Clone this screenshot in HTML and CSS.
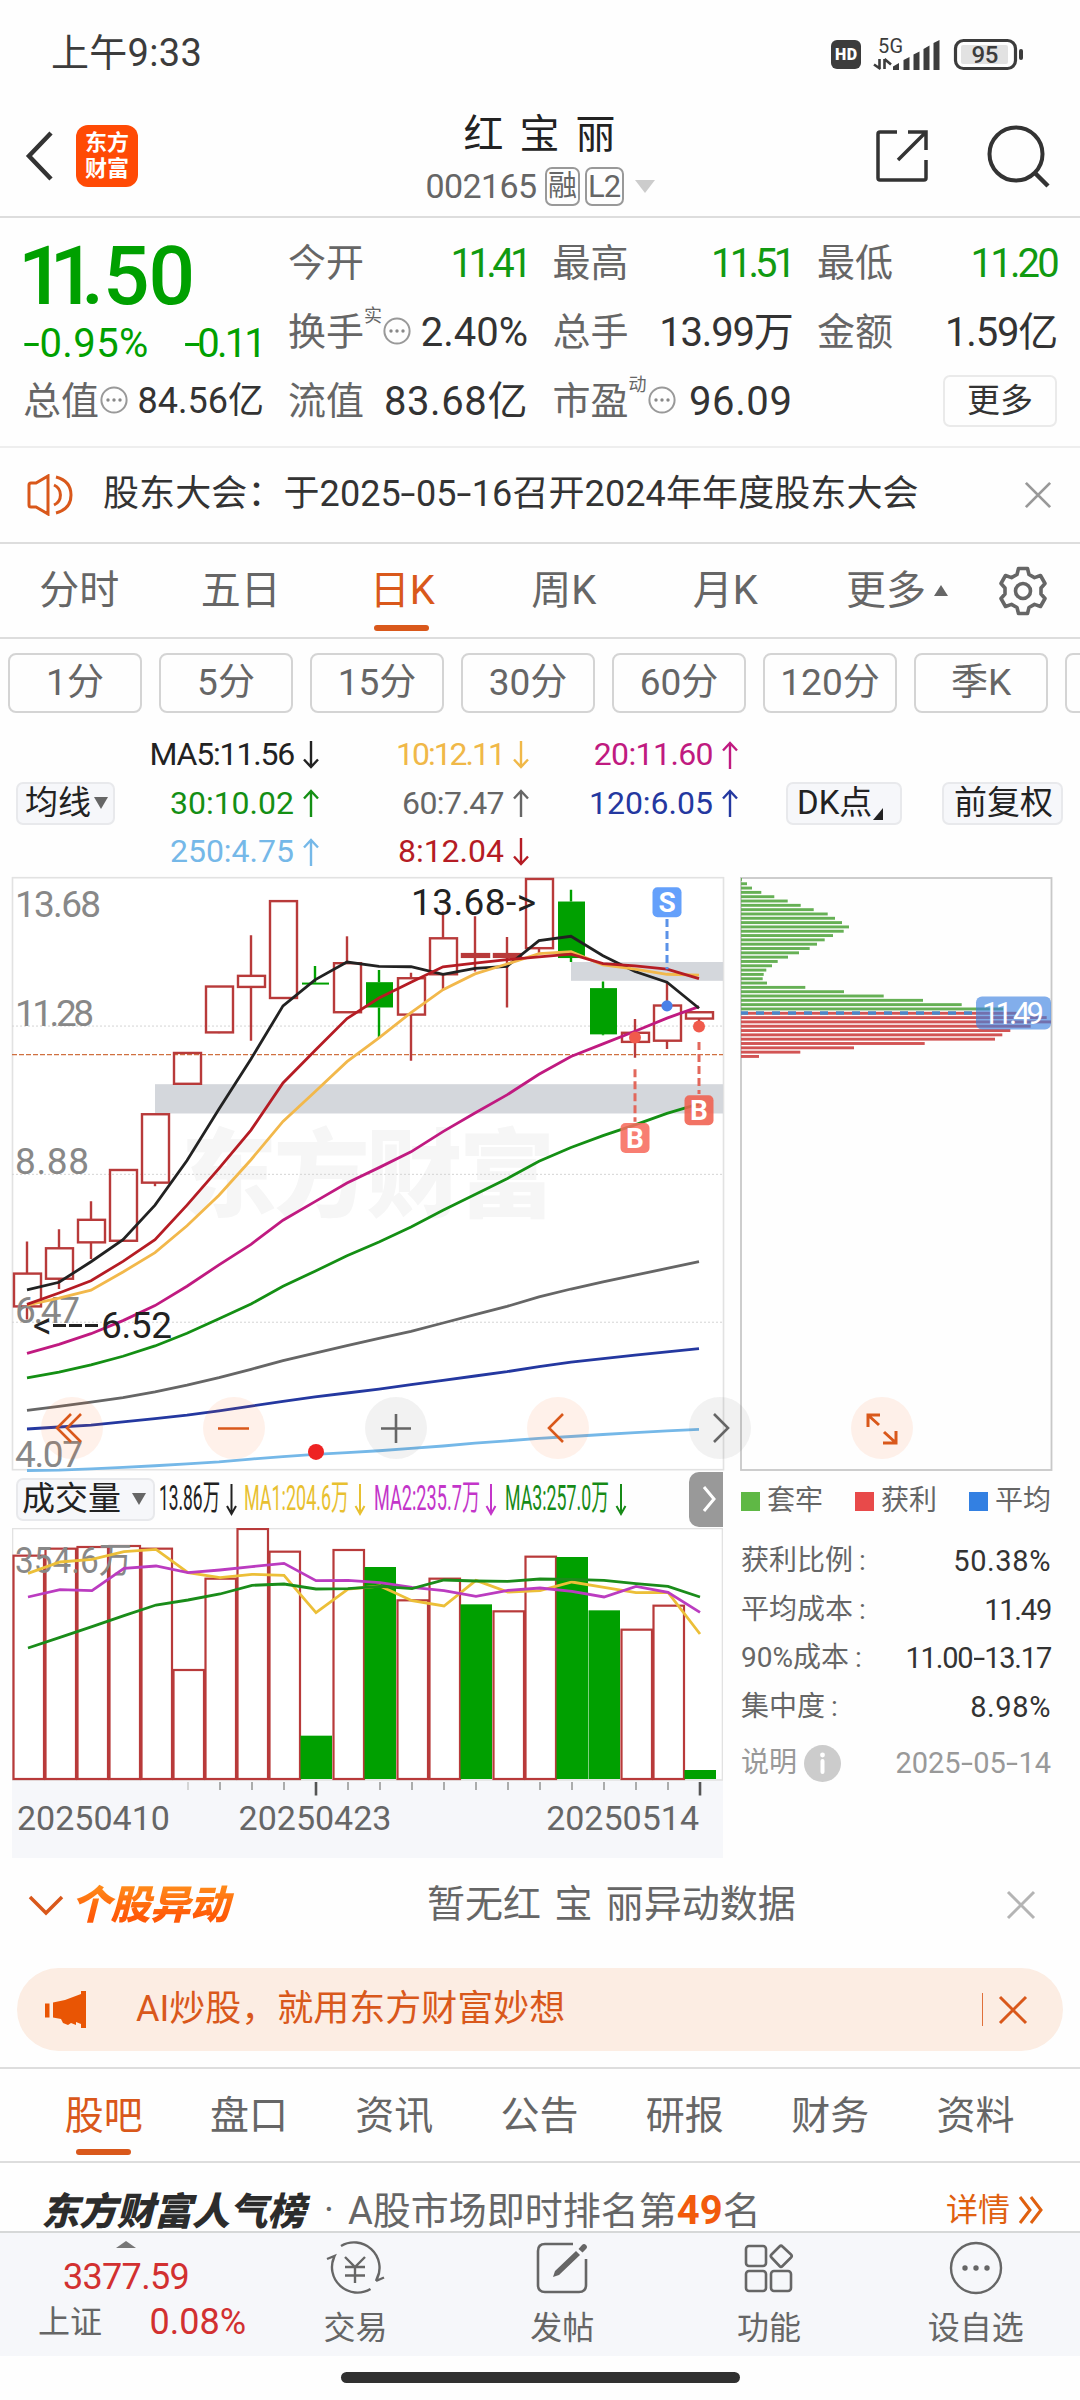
FILE: index.html
```html
<!DOCTYPE html>
<html lang="zh-CN">
<head>
<meta charset="utf-8">
<title>红宝丽 002165</title>
<link rel="stylesheet" href="styles.css">
</head>
<body>
<svg class="defs" width="0" height="0">
  <symbol id="down" viewBox="0 0 16 28"><path d="M8 0V26M1 18.5L8 26L15 18.5" fill="none" stroke="currentColor" stroke-width="2.4"/></symbol>
  <symbol id="up" viewBox="0 0 16 28"><path d="M8 28V2M1 9.5L8 2L15 9.5" fill="none" stroke="currentColor" stroke-width="2.4"/></symbol>
  <symbol id="more" viewBox="0 0 28 28"><circle cx="14" cy="14" r="12.6" fill="none" stroke="#999" stroke-width="2"/><g fill="#888"><circle cx="8" cy="14" r="1.7"/><circle cx="14" cy="14" r="1.7"/><circle cx="20" cy="14" r="1.7"/></g></symbol>
  <symbol id="close" viewBox="0 0 30 30"><path d="M2 2L28 28M28 2L2 28" fill="none" stroke="currentColor" stroke-width="3"/></symbol>
</svg>

<div class="status">
  <span class="clock">上午9:33</span>
  <svg width="200" height="34" viewBox="0 0 200 34">
    <rect x="1" y="3" width="30" height="29" rx="6" fill="#3c3c3c"/>
    <text x="16" y="23" class="hd" textLength="22">HD</text>
    <text x="48" y="16" class="net" textLength="25">5G</text>
    <path d="M49.500 22V32M44 27.500L50.500 32M54.500 32V22M61 27.500L54.500 22" stroke="#3c3c3c" stroke-width="2.600" fill="none"/>
    <path d="M63 33V29.500L69 26V33ZM73.500 33V23L79.500 20V33ZM83.500 33V17.500L89.500 14.500V33ZM93.500 33V12L99.500 8.500V33ZM103.500 33V6L109.500 3V33Z" fill="#3c3c3c"/>
    <rect x="125.500" y="3.500" width="60" height="28" rx="8" fill="none" stroke="#3c3c3c" stroke-width="3.200"/>
    <rect x="131" y="8" width="47" height="19" rx="2" fill="#e2e2e2"/>
    <text x="155" y="26" class="bat" textLength="27">95</text>
    <rect x="189" y="12" width="4" height="11" rx="2" fill="#3c3c3c"/>
  </svg>
</div>

<header class="head">
  <svg class="back" width="30" height="52" viewBox="0 0 30 52"><path d="M27 3L5 26L27 49" fill="none" stroke="#333" stroke-width="4.500"/></svg>
  <div class="logo"><span>东方</span><span>财富</span></div>
  <div class="name">
    <h1>红 宝 丽</h1>
    <div class="code"><span>002165</span><b>融</b><b>L2</b><i></i></div>
  </div>
  <svg class="share" width="54" height="54" viewBox="0 0 54 54"><path d="M22 3H5Q3 3 3 5V49Q3 51 5 51H49Q51 51 51 49V31M33 3H51V21M50 4L23 31" fill="none" stroke="#333" stroke-width="3.500"/></svg>
  <svg width="66" height="66" viewBox="0 0 66 66"><circle cx="30" cy="30" r="26.500" fill="none" stroke="#333" stroke-width="4"/><path d="M49 49L62 62" stroke="#333" stroke-width="4.500"/></svg>
</header>

<section class="quote">
  <div class="price">
    <strong><span>11</span>.50</strong>
    <div class="pct"><span><u>-</u>0.95%</span><span class="chg"><u>-</u>0.11</span></div>
    <div class="cell cap"><label>总值</label><svg class="dots"><use href="#more"/></svg><em class="small">84.56亿</em></div>
  </div>
  <div class="cells">
    <div class="cell"><label>今开</label><em class="down n4">11.41</em></div>
    <div class="cell"><label>最高</label><em class="down n3">11.51</em></div>
    <div class="cell"><label>最低</label><em class="down n2">11.20</em></div>
    <div class="cell"><label>换手</label><sup>实</sup><svg class="dots"><use href="#more"/></svg><em>2.40%</em></div>
    <div class="cell"><label>总手</label><em class="n1">13.99万</em></div>
    <div class="cell"><label>金额</label><em class="n1">1.59亿</em></div>
    <div class="cell"><label>流值</label><em class="p1">83.68亿</em></div>
    <div class="cell"><label>市盈</label><sup>动</sup><svg class="dots"><use href="#more"/></svg><em class="p1">96.09</em></div>
    <div class="cell"><button class="morebtn">更多</button></div>
  </div>
</section>

<section class="notice">
  <svg width="48" height="42" viewBox="0 0 48 42"><path d="M3 11Q3 9 5 9H10L22 2V40L10 33H5Q3 33 3 31Z" fill="none" stroke="#d9581b" stroke-width="3"/><path d="M28 11A11 11 0 0 1 28 31M30 3Q45 7 45 21T30 39" fill="none" stroke="#d9581b" stroke-width="3"/></svg>
  <p>股东大会：于2025<u>-</u>05<u>-</u>16召开2024年年度股东大会</p>
  <svg class="x1"><use href="#close"/></svg>
</section>

<nav class="periods">
  <a>分时</a><a>五日</a><a class="on">日K</a><a>周K</a><a>月K</a>
  <a class="all">更多<i></i></a>
  <svg width="50" height="50" viewBox="0 0 50 50"><path d="M20.500 2.500H29.500L31 8.500L36.500 11.600L42.500 9.500L47 17.500L43 22V28L47 32.500L42.500 40.500L36.500 38.400L31 41.500L29.500 47.500H20.500L19 41.500L13.500 38.400L7.500 40.500L3 32.500L7 28V22L3 17.500L7.500 9.500L13.500 11.600L19 8.500Z" fill="none" stroke="#666" stroke-width="3.600" stroke-linejoin="round"/><circle cx="25" cy="25" r="7.500" fill="none" stroke="#666" stroke-width="3.600"/></svg>
</nav>

<div class="chips"><a>1分</a><a>5分</a><a>15分</a><a>30分</a><a>60分</a><a>120分</a><a>季K</a><a></a></div>

<section class="legend">
  <button class="tag avg">均线<i></i></button>
  <div class="mas">
    <span class="black n1">MA5:11.56<svg><use href="#down"/></svg></span>
    <span class="gold n15">10:12.11<svg><use href="#down"/></svg></span>
    <span class="pink n05">20:11.60<svg><use href="#up"/></svg></span>
    <span class="green">30:10.02<svg><use href="#up"/></svg></span>
    <span class="gray n05">60:7.47<svg><use href="#up"/></svg></span>
    <span class="blue">120:6.05<svg><use href="#up"/></svg></span>
    <span class="sky">250:4.75<svg><use href="#up"/></svg></span>
    <span class="red">8:12.04<svg><use href="#down"/></svg></span>
  </div>
  <button class="tag dk">DK点<i></i></button>
  <button class="tag adj">前复权</button>
</section>

<svg class="chart" id="kline" width="1080" height="600" viewBox="0 0 1080 600"></svg>

<section class="lower">
  <div class="volume">
    <div class="volhead">
      <button class="tag vol">成交量<i></i></button>
      <svg width="480" height="54" viewBox="155 0 480 54">
        <text x="159" y="38" textLength="61" lengthAdjust="spacingAndGlyphs" fill="#222">13.86万</text>
        <text x="244" y="38" textLength="105" lengthAdjust="spacingAndGlyphs" fill="#e8c030">MA1:204.6万</text>
        <text x="374" y="38" textLength="106" lengthAdjust="spacingAndGlyphs" fill="#c335c9">MA2:235.7万</text>
        <text x="505" y="38" textLength="104" lengthAdjust="spacingAndGlyphs" fill="#178a17">MA3:257.0万</text>
        <g fill="none" stroke-width="2"><path d="M231.500 12V42M227 34L231.500 42L236 34" stroke="#222"/><path d="M360 12V42M355.500 34L360 42L364.500 34" stroke="#e8c030"/><path d="M491 12V42M486.500 34L491 42L495.500 34" stroke="#c335c9"/><path d="M621 12V42M616.500 34L621 42L625.500 34" stroke="#178a17"/></g>
      </svg>
      <button class="next"><svg width="16" height="28" viewBox="0 0 16 28"><path d="M3 2L13 14L3 26" fill="none" stroke="#fff" stroke-width="3"/></svg></button>
    </div>
    <svg class="volplot" id="vol" width="711" height="253" viewBox="12 1528 711 253"></svg>
    <div class="axis">
      <svg id="ticks" width="711" height="16" viewBox="12 1780 711 16"></svg>
      <div class="dates"><span>20250410</span><span>20250423</span><span>20250514</span></div>
    </div>
  </div>
  <aside class="cost">
    <div class="keys"><span><i class="kg"></i>套牢</span><span><i class="kr"></i>获利</span><span><i class="kb"></i>平均</span></div>
    <dl>
      <div><dt>获利比例<b>:</b></dt><dd class="p1">50.38%</dd></div>
      <div><dt>平均成本<b>:</b></dt><dd class="n1">11.49</dd></div>
      <div><dt>90%成本<b>:</b></dt><dd class="n1">11.00<u>-</u>13.17</dd></div>
      <div><dt>集中度<b>:</b></dt><dd class="p1">8.98%</dd></div>
    </dl>
    <div class="explain"><span>说明</span><svg width="37" height="37" viewBox="0 0 37 37"><circle cx="18.500" cy="18.500" r="18.500" fill="#ccc"/><path d="M18.500 16V27" fill="none" stroke="#fff" stroke-width="4" stroke-linecap="round"/><circle cx="18.500" cy="10" r="2.400" fill="#fff"/></svg><time>2025<u>-</u>05<u>-</u>14</time></div>
  </aside>
</section>

<section class="moves">
  <svg width="36" height="22" viewBox="0 0 36 22"><path d="M2 3L18 19L34 3" fill="none" stroke="#d9581b" stroke-width="3.500"/></svg>
  <h2>个股异动</h2>
  <p>暂无红 宝 丽异动数据</p>
  <svg class="x2"><use href="#close"/></svg>
</section>

<section class="banner">
  <svg width="44" height="38" viewBox="0 0 44 38"><path d="M0 12.500H4.500V26.500H0ZM8 11.500L20 9L36 3V0H41V37H36V33L31 31V34L26 32L23 34L18 32L16 28L8 26.500Z" fill="#e95504"/></svg>
  <p>AI炒股，就用东方财富妙想</p>
  <i></i>
  <svg class="x3"><use href="#close"/></svg>
</section>

<nav class="tabs"><a class="on">股吧</a><a>盘口</a><a>资讯</a><a>公告</a><a>研报</a><a>财务</a><a>资料</a></nav>

<section class="rank">
  <h3>东方财富人气榜</h3><span class="mid">·</span>
  <p>A股市场即时排名第<b>49</b>名</p>
  <a>详情<svg width="26" height="30" viewBox="0 0 26 30"><path d="M2 2L12 15L2 28M13 2L23 15L13 28" fill="none" stroke="#e0600f" stroke-width="3"/></svg></a>
</section>

<footer class="dock">
  <div class="index"><i></i><b>3377.59</b><p><span>上证</span><em>0.08%</em></p></div>
  <a><svg width="60" height="54" viewBox="0 0 60 54"><g fill="none" stroke="#666" stroke-width="2.400"><path d="M16 5A25.500 25.500 0 0 1 52 38M2 18L9.500 15A25.500 25.500 0 0 0 45.500 48M9.500 15L7 23M51 40L59 36.500M51 40L54 32M20 16L30 26L40 16M20 26H40M20 34.500H40M30 26V42"/></g></svg>交易</a>
  <a><svg width="54" height="54" viewBox="0 0 54 54"><path d="M38 3H10Q3 3 3 10V44Q3 51 10 51H44Q51 51 51 44V18" fill="none" stroke="#666" stroke-width="2.600"/><path d="M41 10L45 14L24 34L18 36L20 30ZM43.500 8L47 4Q49 2 51 4T51 8L47.500 11.500Z" fill="#666"/></svg>发帖</a>
  <a><svg width="54" height="54" viewBox="0 0 54 54"><g fill="none" stroke="#666" stroke-width="2.600"><rect x="4" y="5" width="20" height="20" rx="3"/><rect x="4" y="30" width="20" height="20" rx="3"/><rect x="29" y="30" width="20" height="20" rx="3"/><path d="M37.500 5.500Q39 4 40.500 5.500L49 13.500Q50.500 15 49 16.500L40.500 25Q39 26.500 37.500 25L29.500 16.500Q28 15 29.500 13.500Z"/></g></svg>功能</a>
  <a><svg width="54" height="54" viewBox="0 0 54 54"><circle cx="27" cy="27" r="25" fill="none" stroke="#666" stroke-width="2.400"/><g fill="#666"><circle cx="16" cy="27" r="2.700"/><circle cx="27" cy="27" r="2.700"/><circle cx="38" cy="27" r="2.700"/></g></svg>设自选</a>
</footer>
<div class="home"><i></i></div>
<script src="chart.js"></script>
</body>
</html>
```
FILE: chart.js
```js
// Plot values are stored on a fine vertical scale; K converts them to pixels.
var K = 0.3954, OFF = 16, STEP = 32, X0 = 27;
function y(v) { return +(v * K - OFF).toFixed(2); }
function x(i) { return X0 + i * STEP; }

// [rising, high, bodyTop, bodyBottom, low]
var candles = [
  [1,965,1046,1129,1162],[1,934,982,1059,1085],[1,863,910,967,1009],[1,784,784,963,963],
  [1,643,643,816,825],[1,488,488,566,566],[1,320,320,436,438],[1,190,293,321,457],
  [1,104,104,349,349],[0,268,310,315,315],[1,193,261,385,385],[0,278,309,373,450],
  [1,285,299,391,508],[1,130,198,289,327],[1,142,238,245,282],[1,195,238,245,373],
  [1,48,48,223,235],[0,75,105,248,258],[0,307,324,441,443],[1,402,437,460,500],
  [1,310,368,457,478],[1,385,385,401,435]
];
var lines = {
  '#75b8e8': [1544,1543,1540,1536,1532,1527,1522,1515,1509,1503,1499,1494,1488,1482,1475,1469,1463,1458,1453,1448,1444,1440],
  '#2438a0': [1439,1434,1429,1421,1413,1404,1393,1381,1369,1358,1348,1338,1327,1316,1305,1294,1281,1270,1261,1252,1244,1236],
  '#666666': [1392,1382,1371,1360,1345,1328,1309,1288,1266,1247,1228,1210,1192,1171,1150,1129,1105,1085,1067,1050,1033,1016],
  '#148f14': [1310,1295,1277,1255,1229,1197,1160,1123,1078,1040,1001,966,928,886,846,806,762,727,697,670,641,617],
  '#c01a80': [1248,1225,1198,1165,1127,1078,1024,972,911,864,817,778,738,687,640,594,542,497,465,433,400,371],
  '#222222': [1087,1068,1016,960,873,760,630,503,369,303,258,269,270,289,274,269,204,193,242,282,309,375],
  '#f2b84b': [1126,1108,1088,1042,993,925,848,758,661,586,510,450,386,328,288,263,237,232,265,276,289,291],
  '#b51c24': [1124,1095,1064,1015,960,873,780,683,564,482,401,349,309,270,261,252,245,238,262,268,276,300]
};
function poly(vals, color, fy, x0) {
  return '<polyline fill="none" stroke-width="2.8" stroke="' + color + '" points="' +
    vals.map(function (v, i) { return (x0 + i * STEP) + ',' + fy(v); }).join(' ') + '"/>';
}
var s = '';
s += '<rect x="12.5" y="1.7" width="711" height="592" fill="#fff" stroke="#e2e2e2" stroke-width="1.6"/>';
s += '<text x="368" y="' + y(882) + '" class="mark" text-anchor="middle" textLength="374">东方财富</text>';
[420, 795, 1169].forEach(function (v) { s += '<path d="M12 ' + y(v) + 'H723" stroke="#d4d4d4" stroke-width="1" stroke-dasharray="2 2"/>'; });
s += '<rect x="155" y="' + y(567) + '" width="568" height="29.3" fill="#d4d7dc"/>';
s += '<rect x="571" y="' + y(258) + '" width="152" height="18.8" fill="#d4d7dc"/>';
s += '<path d="M12 ' + y(492) + 'H723" stroke="#d07040" stroke-width="1.2" stroke-dasharray="5 2"/>';
candles.forEach(function (c, i) {
  var cx = x(i), col = c[0] ? '#b83a3a' : '#00a000', t = y(c[2]), b = y(c[3]);
  s += '<path stroke="' + col + '" stroke-width="2.4" d="M' + cx + ' ' + y(c[1]) + 'V' + t + 'M' + cx + ' ' + b + 'V' + y(c[4]) + '"/>';
  if (c[0]) s += '<rect x="' + (cx - 13) + '" y="' + t + '" width="27" height="' + (b - t) + '" fill="' + (b - t < 4 ? col : 'none') + '" stroke="' + col + '" stroke-width="2.4"/>';
  else s += '<rect x="' + (cx - 13) + '" y="' + t + '" width="27" height="' + Math.max(b - t, 2) + '" fill="' + col + '"/>';
});
[['13.68',145,86],['11.28',420,79],['8.88',795,74],['6.47',1170,65],['4.07',1535,68]].forEach(function (a) {
  s += '<text x="15" y="' + y(a[1]) + '" class="lab" textLength="' + a[2] + '">' + a[0] + '</text>';
});
for (var c in lines) s += poly(lines[c], c, y, X0);
s += '<text x="33" y="' + y(1210) + '" class="lab dark">&lt;</text><path d="M53 ' + y(1177) + 'H99" stroke="#222" stroke-width="3" stroke-dasharray="13 3"/>';
s += '<text x="101" y="' + y(1210) + '" class="lab dark" textLength="71">6.52</text>';
s += '<text x="411" y="' + y(138) + '" class="lab dark" textLength="125">13.68-&gt;</text>';
function badge(cx, cy, ch, col) {
  return '<rect x="' + (cx - 14.5) + '" y="' + (y(cy) - 15) + '" width="29" height="30" rx="5" fill="' + col + '" fill-opacity=".88"/><text x="' + cx + '" y="' + (y(cy) + 10) + '" class="badge">' + ch + '</text>';
}
function dash(cx, a, b, col) { return '<path d="M' + cx + ' ' + y(a) + 'V' + y(b) + '" stroke="' + col + '" stroke-width="3" stroke-dasharray="8 4"/>'; }
s += dash(667, 149, 276, '#5b92e8') + dash(635, 529, 662, '#e2685c') + dash(699, 460, 592, '#e2685c');
s += '<circle cx="667" cy="' + y(369) + '" r="5.6" fill="#4a80e8"/><circle cx="635" cy="' + y(449) + '" r="6" fill="#f05a4c"/><circle cx="699" cy="' + y(421) + '" r="6" fill="#f05a4c"/>';
s += badge(667, 107, 'S', '#4f93fa') + badge(635, 703, 'B', '#f76c5e') + badge(699, 633, 'B', '#f0604f');

// Cost distribution
s += '<rect x="741" y="2" width="310.500" height="592" fill="none" stroke="#c8c8c8" stroke-width="1.800"/>';
var dist = [66,81,96,124,163,203,242,281,323,345,366,387,371,339,314,291,269,237,204,173,156,139,131,128,141,256,372,491,609,725,850,890,980,993,932,871,847,825,614,402,241,117];
dist.forEach(function (d, i) {
  s += '<rect x="741" y="' + (y(49 + i * 10.92) - 1.4).toFixed(2) + '" width="' + ((d - 63) / 3).toFixed(1) + '" height="2.9" fill="' + (i < 31 ? '#66b055' : '#d25454') + '"/>';
});
s += '<path d="M741 ' + y(387) + 'H976" stroke="#4a86c8" stroke-width="3.4" stroke-dasharray="8 8" stroke-dashoffset="1"/>';
s += '<rect x="976" y="' + y(345) + '" width="75" height="33" rx="6" fill="#3c80e0" fill-opacity=".64"/><text x="982" y="' + (y(415)) + '" class="avgp" textLength="62">11.49</text>';

// Floating controls
[[72,1],[234,1],[396,0],[558,1],[720,0],[882,1]].forEach(function (p) {
  s += '<circle cx="' + p[0] + '" cy="552" r="31" fill="' + (p[1] ? '#fa6414' : '#555') + '" fill-opacity="' + (p[1] ? .09 : .08) + '"/>';
});
s += '<g fill="none" stroke-width="2.600"><path stroke="#d9581b" d="M71 538L57 552L71 566M81 538L67 552L81 566M218 552.500H249M563 538L549 552L563 566"/><path stroke="#666" d="M396 538V567M381 552.500H411M714 538L728 552L714 566"/></g>';
s += '<path d="M868 551V539H880M868.500 539.500L879 549M896 555V567H883M895.500 566.500L884 556" stroke="#d9581b" stroke-width="3" fill="none"/>';
s += '<circle cx="316" cy="' + y(1497) + '" r="8" fill="#ee2222"/>';
document.getElementById('kline').innerHTML = s;

// Volume
function vy(v) { return +(1460 + v / 3).toFixed(2); }
var greens = {9:1, 11:1, 14:1, 17:1, 18:1, 21:1};
var vols = [287,266,261,258,266,630,356,207,275,827,270,321,421,356,433,454,290,291,451,509,437,930];
var v = '<rect x="12.500" y="1528.500" width="710" height="251.500" fill="#fff" stroke="#e2e2e2" stroke-width="1.600"/>';
vols.forEach(function (d, i) {
  var l = 12.5 + i * 32, g = greens[i];
  v += '<rect x="' + (g ? l : l + 1) + '" y="' + vy(d) + '" width="' + (g ? 31.5 : 30.5) + '" height="' + (1779 - vy(d)) + '" fill="' + (g ? '#00a000' : '#fff') + '" stroke="' + (g ? 'none' : '#b83a3a') + '" stroke-width="2.2"/>';
});
v += '<text x="15" y="' + vy(340) + '" class="vlab" textLength="117" lengthAdjust="spacingAndGlyphs">354.6万</text>';
v += poly([340,306,298,275,268,338,353,343,346,458,387,378,422,438,361,396,392,366,382,398,397,522], '#ecbf38', vy, 28);
v += poly([411,389,392,325,318,338,330,320,310,362,361,368,382,392,409,391,384,394,411,379,397,457], '#bb3cc0', vy, 28);
v += poly([564,532,500,467,435,420,402,376,372,387,386,379,386,360,363,364,357,358,361,371,379,411], '#1a8c1a', vy, 28);
document.getElementById('vol').innerHTML = v;
var t = '';
for (var i = 5; i < 22; i++) {
  var big = i === 9 || i === 21;
  t += '<path d="M' + (28 + i * 32) + ' 1781V' + (big ? 1794.5 : 1789) + '" stroke="' + (big ? '#555' : i === 5 ? '#ccc' : '#999') + '" stroke-width="' + (big ? 2.6 : 1.6) + '"/>';
}
document.getElementById('ticks').innerHTML = t;
```
FILE: styles.css
```css
* { box-sizing: border-box; margin: 0; padding: 0; }
body { width: 1080px; height: 2400px; overflow: hidden; background: #fefefe; color: #333; font-family: Roboto, "Noto Sans CJK SC", sans-serif; font-weight: 400; line-height: 1.2; }
em, i { font-style: normal; }
i { display: block; }
u { display: inline-block; text-decoration: none; transform: scaleX(1.5); margin: 0 2.500px; }
button { font: inherit; color: inherit; background: none; border: 0; }
svg { display: block; flex: none; }
text { font-family: Roboto, "Noto Sans CJK SC", sans-serif; }
.defs { position: absolute; }
.n05 { letter-spacing: -.6px; }
.n1 { letter-spacing: -1.2px; }
.n15 { letter-spacing: -2px; }
.n2 { letter-spacing: -2.8px; }
.n3 { letter-spacing: -3.8px; }
.n4 { letter-spacing: -4.6px; }
.p1 { letter-spacing: .6px; }

.status { height: 108px; display: flex; align-items: center; justify-content: space-between; padding: 0 50px 0 51px; }
.clock { font-size: 38px; color: #3c3c3c; letter-spacing: .3px; }
.hd { font-size: 16px; font-weight: 900; fill: #fff; text-anchor: middle; }
.net { font-size: 20px; fill: #3c3c3c; }
.bat { font-size: 24px; fill: #3c3c3c; text-anchor: middle; font-weight: 500; }

.head { height: 110px; display: flex; align-items: center; border-bottom: 2px solid #ddd; padding: 0 28px 12px 24px; }
.back { margin-right: 22px; }
.logo { width: 62px; height: 62px; border-radius: 12px; background: #ff4a05; color: #fff; font-size: 22px; font-weight: 700; line-height: 26px; padding-top: 5px; text-align: center; }
.logo span { display: block; }
.name { flex: 1; padding-left: 66px; text-align: center; margin-top: 8px; }
.name h1 { font-size: 40px; line-height: 52px; font-weight: 400; color: #222; word-spacing: 6px; }
.code { display: flex; justify-content: center; align-items: center; height: 50px; color: #666; font-size: 34px; letter-spacing: -.6px; padding-left: 1px; }
.code span { margin-right: 8px; }
.code b { font-weight: 400; font-size: 29px; line-height: 35px; border: 2px solid #999; border-radius: 7px; width: 35px; height: 39px; margin-right: 5px; letter-spacing: -1px; }
.code b + b { width: 39px; font-size: 31px; }
.code i { border: 10px solid transparent; border-top: 13px solid #ccc; border-bottom: 0; margin-left: 6px; }
.share { margin-right: 57px; }
.head svg:last-child { margin-top: 1px; }

.quote { height: 230px; display: flex; padding-left: 23px; border-bottom: 2px solid #eee; }
.price { width: 241px; color: #00a000; }
.price strong { display: block; font-size: 82px; font-weight: 500; letter-spacing: -1px; line-height: 90px; margin: 13px 0 0 -5px; }
.price strong span { letter-spacing: -15px; }
.pct { display: flex; justify-content: space-between; font-size: 40px; line-height: 46px; letter-spacing: .4px; }
.chg { letter-spacing: -2.800px; }
.cells { display: grid; grid-template-columns: repeat(3, 240px); grid-auto-rows: 69px; column-gap: 24.500px; padding: 11px 0 0 24px; }
.cell { display: flex; align-items: center; height: 69px; color: #333; font-size: 40px; }
.cell label { font-size: 38px; color: #666; }
.cell em { margin-left: auto; white-space: nowrap; }
.cell em.down { color: #119a11; }
.cell em.small { font-size: 36px; }
.cap { height: 69px; }
sup { width: 18px; font-size: 18px; line-height: 18px; align-self: flex-start; margin-top: 9px; color: #666; }
.dots { width: 28px; height: 28px; margin-top: -4px; margin-left: 1px; }
.morebtn { width: 114px; height: 52px; margin-left: auto; border: 2px solid #eaeaea; border-radius: 7px; font-size: 33px; line-height: 46px; margin-top: -2px; }

.notice { height: 96px; display: flex; align-items: center; padding: 0 28px 0 26px; border-bottom: 2px solid #ddd; }
.notice p { font-size: 36px; flex: 1; margin-left: 29px; letter-spacing: .1px; white-space: nowrap; }
.x1 { width: 28px; height: 28px; color: #999; }

.periods { height: 95px; display: flex; align-items: center; border-bottom: 2px solid #ddd; color: #666; font-size: 40px; }
.periods a { width: 161.500px; height: 93px; line-height: 94px; text-align: center; position: relative; left: -1.500px; }
.on { color: #d9581b; }
.on::after { content: ""; position: absolute; left: 50%; bottom: 6px; width: 55px; height: 6px; margin-left: -28px; border-radius: 3px; background: #d9581b; }
.periods .all { width: 190px; display: flex; align-items: center; padding-left: 40px; }
.periods .all i { border: 7px solid transparent; border-bottom: 11px solid #666; border-top: 0; margin-left: 8px; }

.chips { display: flex; gap: 17px; padding: 14px 0 0 8px; height: 91px; overflow: hidden; }
.chips a { flex: none; width: 134px; height: 60px; border: 2px solid #d4d4d4; border-radius: 8px; line-height: 55px; text-align: center; font-size: 37px; color: #666; }

.legend { height: 146px; display: flex; align-items: center; padding: 0 0 0 16px; }
.tag { display: flex; align-items: center; height: 43px; background: #f6f7fa; border: 2px solid #e8e9ec; border-radius: 7px; color: #222; font-size: 33px; line-height: 38px; white-space: nowrap; }
.avg { width: 99px; padding-left: 7px; }
.avg i, .vol i { border: 7px solid transparent; border-top: 12px solid #666; border-bottom: 0; margin-left: 3px; }
.mas { display: grid; grid-template-columns: 204px 210px 209px; grid-auto-rows: 48.500px; width: 623px; font-size: 32px; margin-right: 48px; }
.mas span { display: flex; align-items: center; justify-content: flex-end; }
.mas svg { width: 16px; height: 28px; margin-left: 9px; }
.black { color: #222; } .gold { color: #f0b848; } .pink { color: #c01a80; } .green { color: #148f14; }
.gray { color: #666; } .blue { color: #2438a0; } .sky { color: #75b8e8; } .red { color: #b51c24; }
.dk { width: 116px; padding-left: 9px; }
.dk i { border-left: 10px solid transparent; border-bottom: 12px solid #222; align-self: flex-end; margin: 0 0 3px 1px; }
.adj { width: 121px; margin-left: 40px; padding-left: 10px; }

.chart { margin-bottom: -6px; }
.mark { font-size: 96px; font-weight: 900; fill: #f6f6f6; }
.lab { font-size: 37px; fill: #888; }
.dark { fill: #222; }
.badge { font-size: 28px; font-weight: 700; fill: #fff; text-anchor: middle; }
.avgp { font-size: 31px; fill: #fff; }

.lower { display: flex; height: 388px; }
.volume { width: 723px; padding-left: 12px; }
.volhead { display: flex; align-items: center; height: 58px; }
.volhead text { font-size: 35px; }
.vol { width: 139px; margin-left: 4px; padding-left: 4px; }
.vol i { margin-left: auto; margin-right: 7px; }
.next { margin-left: auto; width: 34px; height: 55px; background: #999; border-radius: 10px 0 0 10px; padding-left: 12px; flex: none; }
.vlab { font-size: 36px; fill: #888; }
.axis { height: 77px; background: #f6f7fa; }
.dates { display: flex; justify-content: space-between; font-size: 34px; line-height: 40px; color: #666; padding: 1px 24px 0 5px; }
.dates span:nth-child(2) { margin-left: -86px; }
.cost { flex: 1; padding: 12px 29px 0 18px; font-size: 28px; color: #666; }
.keys { display: flex; justify-content: space-between; line-height: 38px; margin-bottom: 18px; }
.keys span { display: flex; align-items: center; }
.keys i { width: 19px; height: 19px; margin-right: 7px; }
.kg { background: #5fb845; } .kr { background: #e84a4a; } .kb { background: #3380e2; }
dl div { display: flex; justify-content: space-between; height: 48.500px; line-height: 46px; }
dt b { font-weight: 400; margin-left: 6px; }
dd { color: #333; font-size: 29px; }
.explain { display: flex; align-items: center; color: #999; height: 38px; margin-top: 12px; }
.explain svg { margin-left: 7px; }
.explain time { margin-left: auto; font-size: 29px; letter-spacing: -.1px; }

.moves { height: 94px; display: flex; align-items: center; padding: 0 44px 0 28px; }
.moves h2 { width: 176px; margin-left: 7px; font-size: 40px; font-weight: 900; font-style: italic; letter-spacing: -.5px; line-height: 52px; padding-top: 2px; color: transparent; background: linear-gradient(#ff8a1a 15%, #ff5a08 70%); -webkit-background-clip: text; background-clip: text; white-space: nowrap; }
.moves p { flex: 1; font-size: 38px; color: #666; margin-left: 180px; word-spacing: 4px; white-space: nowrap; }
.x2 { width: 30px; height: 30px; color: #b4b4b4; }

.banner { height: 83px; margin: 16px 17px; border-radius: 42px; background: #fcede3; display: flex; align-items: center; padding: 0 35px 0 28px; color: #d9581b; }
.banner p { flex: 1; font-size: 36px; margin-left: 47px; }
.banner i { width: 1.500px; height: 33px; background: #e0703a; margin-right: 15px; }
.x3 { width: 30px; height: 30px; color: #d9581b; }

.tabs { height: 96px; display: flex; border-top: 2px solid #ddd; border-bottom: 2px solid #ddd; padding: 0 31px; font-size: 39px; color: #666; }
.tabs a { width: 145.300px; text-align: center; line-height: 95px; position: relative; }

.rank { height: 68px; overflow: hidden; display: flex; align-items: center; padding: 27px 36px 0 41px; white-space: nowrap; font-size: 38px; color: #666; }
.rank h3 { width: 269px; font-size: 38px; line-height: 40px; font-weight: 900; font-style: italic; color: #2c2c2c; letter-spacing: -.3px; padding-top: 3px; }
.mid { width: 38px; text-align: center; }
.rank p { line-height: 46px; }
.rank p b { color: #f25a0c; font-size: 40px; }
.rank a { margin-left: auto; display: flex; align-items: center; gap: 8px; color: #e0600f; font-size: 32px; }

.dock { height: 125px; background: #f6f7fa; border-top: 2px solid #d6d8d8; display: flex; color: #666; font-size: 32px; }
.dock a { width: 206.800px; display: flex; flex-direction: column; align-items: center; padding-top: 8px; line-height: 44px; gap: 11px; }
.index { width: 252px; display: flex; flex-direction: column; align-items: center; }
.index i { border: 10px solid transparent; border-bottom: 7px solid #777; border-top: 0; margin-top: 8px; }
.index b { font-weight: 400; color: #d23030; font-size: 36px; line-height: 42px; letter-spacing: -.7px; margin-top: 8px; }
.index p { display: flex; width: 208px; justify-content: space-between; align-items: center; line-height: 48px; margin-left: 32px; }
.index em { color: #d23030; font-size: 36px; }
.home { height: 44px; display: flex; justify-content: center; padding-top: 16px; }
.home i { width: 399px; height: 11px; border-radius: 6px; background: #303030; }
```
